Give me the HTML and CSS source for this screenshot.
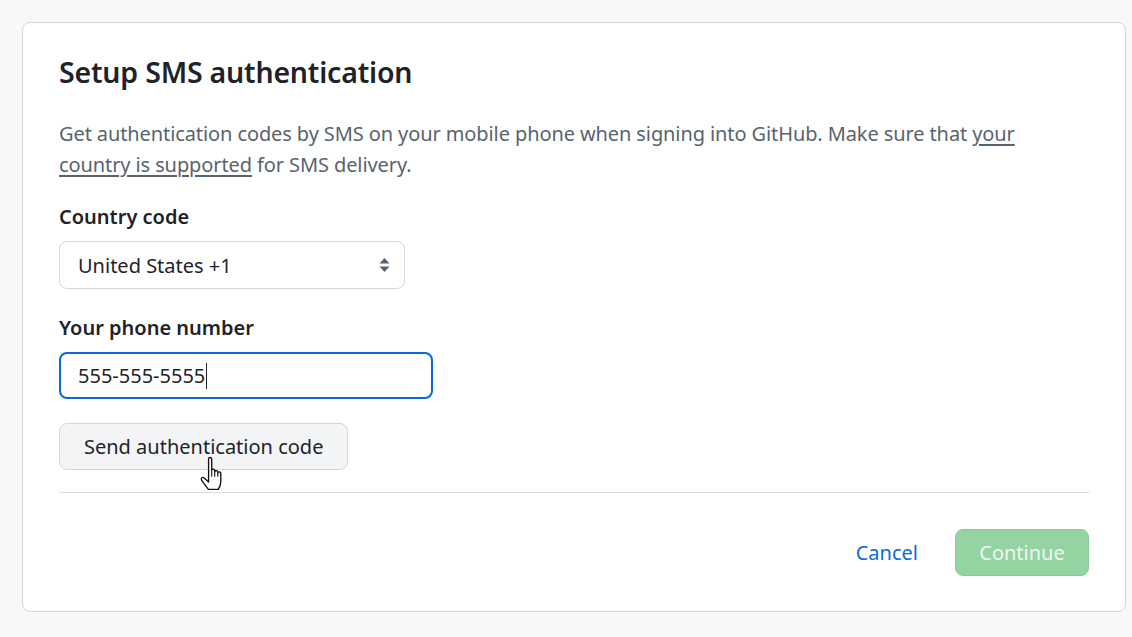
FILE: index.html
```html
<!DOCTYPE html>
<html lang="en">
<head>
    <meta charset="UTF-8">
    <title>Setup SMS authentication</title>
    <link rel="stylesheet" href="styles.css">
</head>
<body>
    <!-- SMS setup card -->
    <section class="card">
        <h1 class="title">Setup SMS authentication</h1>
        <p class="intro">Get authentication codes by SMS on your mobile phone when signing into GitHub. Make sure that <a href="#" class="plain-link">your country is supported</a> for SMS delivery.</p>

        <div class="field">
            <label class="field-label">Country code</label>
            <div class="select-box">
                <span>United States +1</span>
                <svg class="select-arrows" width="11" height="16" viewBox="0 0 11 16">
                    <path d="M5.5 1 L10.5 6.5 H0.5 Z" fill="#59636e"/>
                    <path d="M5.5 15 L10.5 9.5 H0.5 Z" fill="#59636e"/>
                </svg>
            </div>
        </div>

        <div class="field">
            <label class="field-label">Your phone number</label>
            <div class="text-input"><span>555-555-5555</span><i class="caret"></i></div>
        </div>

        <div class="send-row">
            <button class="btn">Send authentication code</button>
            <svg class="hand-cursor" width="24" height="35" viewBox="1 1 19 29">
                <path d="M8.5 3.2c0-1.3 2.6-1.3 2.6 0v9.6c0-1.2 2.5-1.2 2.5 0v1.2c0-1.2 2.5-1.2 2.5 0v1.1c0-1.2 2.5-1.2 2.5 0v7c0 3.2-1 5-2 6.6H8.3C6.8 26.6 4.6 24 2.8 21.2 1.8 19.6 3.2 18 4.6 19.1l3.9 3.4Z" fill="#fff" stroke="#111" stroke-width="1.1" stroke-linejoin="round"/>
                <path d="M11.1 12.8v5.4M13.6 14v4.2M16.1 15.1v3.1" stroke="#111" stroke-width="0.9"/>
            </svg>
        </div>

        <div class="card-footer">
            <a href="#" class="cancel-link">Cancel</a>
            <button class="btn-primary" disabled>Continue</button>
        </div>
    </section>
</body>
</html>
```

FILE: styles.css
```css
/* base */
* {
    margin: 0;
    padding: 0;
    box-sizing: border-box;
}

body {
    background: #f6f8fa;
    font-family: 'Noto Sans', 'Open Sans', sans-serif;
    color: #1f2328;
    padding: 22px 6px 25px 22px;
}

/* card */
.card {
    background: #fff;
    border: 1px solid #d0d7de;
    border-radius: 8px;
    padding: 30px 36px 34px 36px;
    height: 590px;
}

.title {
    font-size: 28.5px;
    font-weight: 600;
    line-height: 38px;
    letter-spacing: -0.2px;
    margin-bottom: 27px;
}

.intro {
    font-size: 20px;
    line-height: 31px;
    color: #59636e;
    letter-spacing: -0.1px;
    margin-bottom: 24px;
}

.plain-link {
    color: #59636e;
    text-decoration: underline;
    text-underline-offset: 3px;
}

/* form fields */
.field {
    margin-bottom: 26px;
}

.field-label {
    display: block;
    font-size: 20px;
    font-weight: 600;
    line-height: 26px;
    margin-bottom: 11px;
}

.select-box {
    width: 346px;
    height: 48px;
    border: 1px solid #d0d7de;
    border-radius: 8px;
    display: flex;
    align-items: center;
    justify-content: space-between;
    padding: 0 14px 0 18px;
    font-size: 20px;
}

.text-input {
    width: 374px;
    height: 47px;
    border: 2px solid #0969da;
    border-radius: 8px;
    display: flex;
    align-items: center;
    padding: 0 17px;
    font-size: 20px;
}

.caret {
    display: inline-block;
    width: 1px;
    height: 26px;
    background: #1f2328;
    margin-left: 1px;
}

/* send code */
.send-row {
    position: relative;
    margin-top: -2px;
    padding-bottom: 22px;
    border-bottom: 1px solid #d8dee4;
}

.btn {
    height: 47px;
    padding: 0 24px;
    font-family: inherit;
    font-size: 20px;
    color: #1f2328;
    background: #f3f4f6;
    border: 1px solid #d0d7de;
    border-radius: 8px;
}

.hand-cursor {
    position: absolute;
    left: 140px;
    top: 33px;
}

/* footer */
.card-footer {
    display: flex;
    justify-content: flex-end;
    align-items: center;
    gap: 37px;
    margin-top: 36px;
}

.cancel-link {
    color: #0969da;
    font-size: 20px;
    text-decoration: none;
}

.btn-primary {
    width: 134px;
    height: 47px;
    font-family: inherit;
    font-size: 20px;
    color: #eef8f0;
    background: #94d3a2;
    border: 1px solid #8cc99a;
    border-radius: 8px;
}
```
